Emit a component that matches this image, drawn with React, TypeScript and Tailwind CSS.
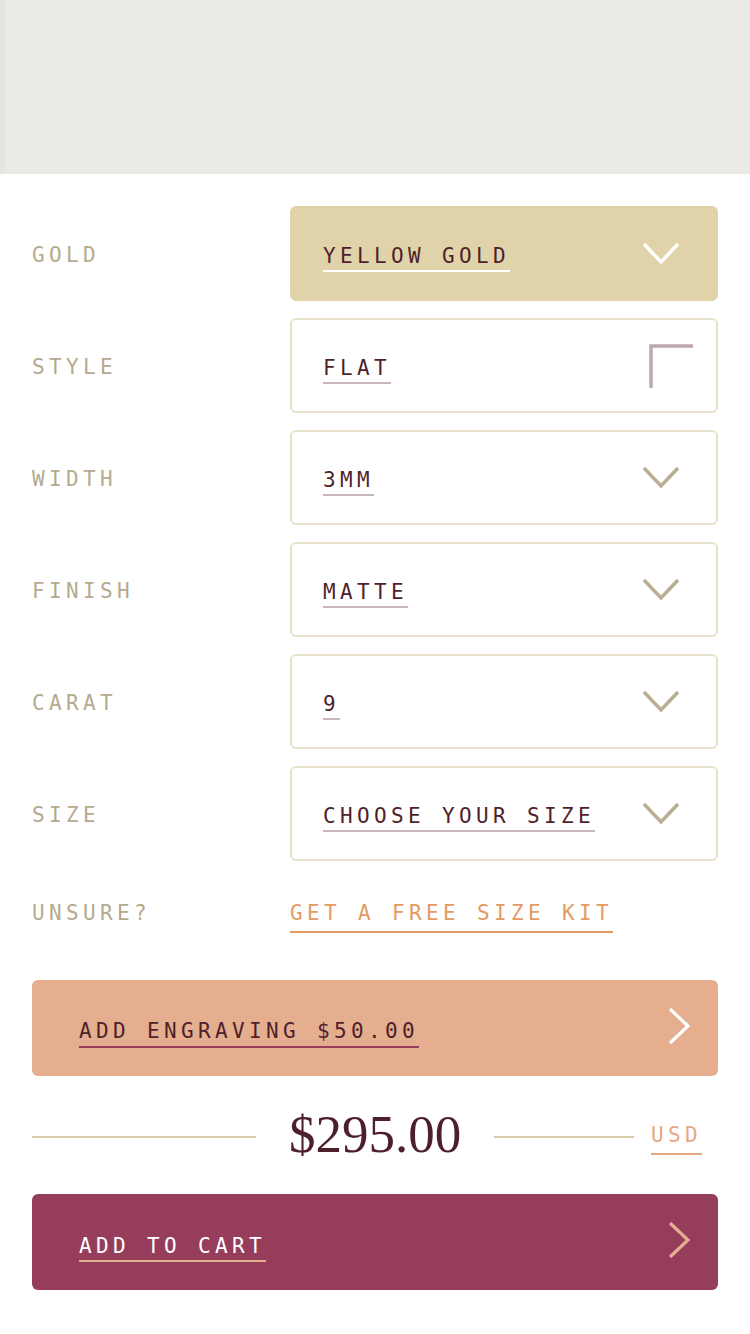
import React from "react";

const mono = "font-['DejaVu_Sans_Mono','Liberation_Mono',monospace]";
const type = "text-[21px] leading-[20px] tracking-[4.36px]";

type Opt = {
  label: string;
  value: string;
  active?: boolean;
  icon?: "chevron" | "corner";
};

const options: Opt[] = [
  { label: "GOLD", value: "YELLOW GOLD", active: true },
  { label: "STYLE", value: "FLAT", icon: "corner" },
  { label: "WIDTH", value: "3MM" },
  { label: "FINISH", value: "MATTE" },
  { label: "CARAT", value: "9" },
  { label: "SIZE", value: "CHOOSE YOUR SIZE" },
];

function ChevronDown({ color }: { color: string }) {
  return (
    <svg width="38" height="24" viewBox="0 0 38 24" className="mr-[36px] shrink-0" fill="none">
      <polyline points="2,2 19,20 36,2" stroke={color} strokeWidth="3.5" />
    </svg>
  );
}

function Corner() {
  return (
    <svg width="46" height="46" viewBox="0 0 46 46" className="mr-[22px] shrink-0" fill="none">
      <path d="M3 45 V3 H45" stroke="#bca9ad" strokeWidth="3.5" />
    </svg>
  );
}

function ChevronRight({ color }: { color: string }) {
  return (
    <svg width="24" height="38" viewBox="0 0 24 38" className="mr-[27px] mb-[4px] shrink-0" fill="none">
      <polyline points="3,2 21,19 3,36" stroke={color} strokeWidth="3.2" />
    </svg>
  );
}

function OptionRow({ opt }: { opt: Opt }) {
  return (
    <div className="flex items-center">
      <div className={`w-[258px] shrink-0 mt-[3px] ${type} text-[#b5aa8e] ${mono}`}>{opt.label}</div>
      <div
        className={`flex-1 h-[95px] rounded-[6px] border-2 flex items-center justify-between pl-[31px] ${
          opt.active ? "bg-[#e0d3aa] border-[#e0d3aa]" : "bg-white border-[#e8e2cc]"
        }`}
      >
        <span
          className={`mt-[10px] inline-block pb-[4px] border-b-2 ${type} text-[#4f1f2b] ${mono} ${
            opt.active ? "border-white" : "border-[#c8b6bb]"
          }`}
        >
          {opt.value}
        </span>
        {opt.icon === "corner" ? (
          <Corner />
        ) : (
          <ChevronDown color={opt.active ? "#ffffff" : "#b9ad94"} />
        )}
      </div>
    </div>
  );
}

export default function App() {
  return (
    <div className="w-[750px] min-h-[1334px] bg-white">
      {/* product image placeholder */}
      <div className="h-[174px] bg-[#ebeae7] border-l-[5px] border-[#e6e6e1]" />

      <div className="px-[32px] pt-[32px] pb-[44px]">
        <div className="flex flex-col gap-[17px]">
          {options.map((o) => (
            <OptionRow key={o.label} opt={o} />
          ))}
        </div>

        {/* size kit */}
        <div className="flex items-start mt-[42px]">
          <div className={`w-[258px] shrink-0 ${type} text-[#b5aa8e] ${mono}`}>UNSURE?</div>
          <a
            href="#"
            className={`inline-block pb-[8px] border-b-2 border-[#e39a63] ${type} text-[#e39a63] ${mono}`}
          >
            GET A FREE SIZE KIT
          </a>
        </div>

        {/* engraving */}
        <button className="mt-[47px] w-full h-[96px] rounded-[6px] bg-[#e4ae8f] flex items-center justify-between pl-[47px]">
          <span
            className={`mt-[13px] inline-block pb-[5px] border-b-2 border-[#963d5c] ${type} text-[#4f1f2b] ${mono}`}
          >
            ADD ENGRAVING $50.00
          </span>
          <ChevronRight color="#ffffff" />
        </button>

        {/* price */}
        <div className="h-[118px] flex items-center">
          <div className="w-[224px] h-[2px] mt-[4px] bg-[#d8cca8]" />
          <div className="mx-[33px] mb-[2px] text-[53px] leading-[53px] text-[#4d1f2b] font-['Liberation_Serif',serif]">
            $295.00
          </div>
          <div className="flex-1 h-[2px] mt-[4px] bg-[#d8cca8]" />
          <span
            className={`ml-[17px] mr-[16px] mt-[9px] inline-block pb-[8px] border-b-2 border-[#e6a985] ${type} text-[#e6a985] ${mono}`}
          >
            USD
          </span>
        </div>

        {/* add to cart */}
        <button className="w-full h-[96px] rounded-[6px] bg-[#963d5c] flex items-center justify-between pl-[47px]">
          <span
            className={`mt-[14px] inline-block pb-[4px] border-b-2 border-[#e4ae8f] ${type} text-white ${mono}`}
          >
            ADD TO CART
          </span>
          <ChevronRight color="#e4ae8f" />
        </button>
      </div>
    </div>
  );
}
